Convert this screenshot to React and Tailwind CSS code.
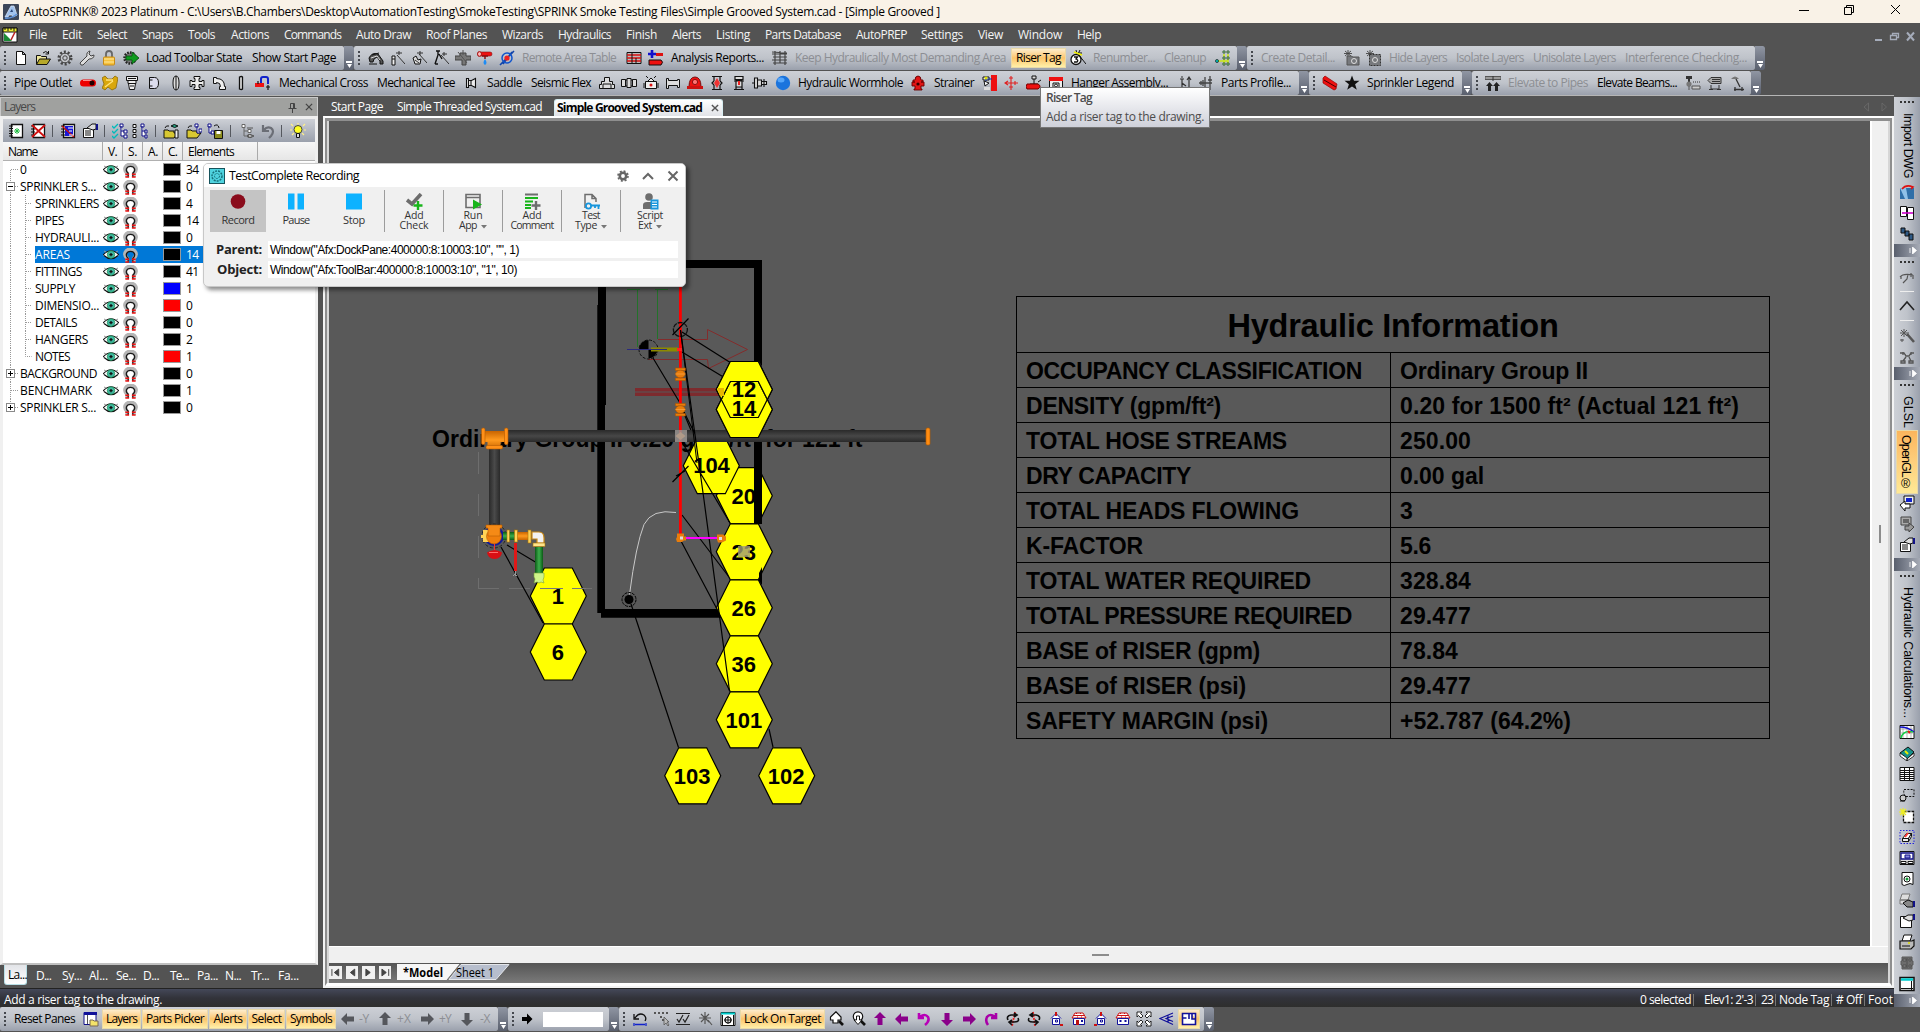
import React, { useLayoutEffect, useRef } from "react";

/* Text whose tracking is adjusted so that it fills a known width. */
function Fit({ w, className = "", children }) {
  const ref = useRef(null);
  useLayoutEffect(() => {
    const el = ref.current;
    el.style.letterSpacing = "0px";
    const natural = el.getBoundingClientRect().width;
    el.style.letterSpacing = (w - natural) / String(children).length + "px";
  }, [w, children]);
  return (
    <span ref={ref} className={"inline-block flex-none whitespace-pre " + className}>
      {children}
    </span>
  );
}

const K = "#111";
const G = "#6b6d72";

const magnet = (
  <>
    <path d="M4.500 15V11C0 7 2.500 1.500 8 1.500S16 7 11.500 11v4" fill="none" stroke="#b5b5b5" strokeWidth="4" />
    <path d="M5.500 15V11C2 8 3.500 3.500 8 3.500S14 8 10.500 11v4" fill="none" stroke="#1a1a1a" strokeWidth="1.400" />
    <path d="M2.500 12h4M2.500 15h4M9.500 12h4M9.500 15h4" stroke="#e11" strokeWidth="1.600" />
  </>
);
const tree = (c) => (
  <>
    <path d="M6 3v10h5M6 8h5" fill="none" stroke={c} />
    <path d="M4 1.500h3v3H4zM10 6.500h3v3h-3zM10 11.500h3v3h-3z" fill="#fff" stroke={c} />
  </>
);
const folder = <path d="M1 14V7h4l1 1h5v2h4l-4 5H1z" fill="#d8c832" stroke={K} />;
const house = (wide) =>
  wide ? (
    <>
      <path d="M1 7l3-5h8l3 5z" fill="#fff" stroke="#c11" />
      <path d="M3 4.500h10M5 2.500h1M9 2.500h1M6 6h1M10 6h1" stroke="#c11" />
      <path d="M2.500 7.500h11v6h-11z" fill="#fff" stroke="#11119a" />
    </>
  ) : (
    <>
      <path d="M4.500 7.500h7v6h-7zM3 7.500l5-5 5 5" fill="#fff" stroke="#11119a" />
      <path d="M8 1v4" stroke="#c11" strokeWidth="2" />
      <path d="M7.500 9h2v2h-2z" fill="none" stroke="#11119a" />
    </>
  );
const arrow = (rot, c) => (
  <path transform={`rotate(${rot} 8 8)`} d="M1 8l6-6v3.500h7v5H7V14z" fill={c} />
);
const burst = (c) => <path d="M4 0v7M0 3.500h8M1 1l6 5M7 1L1 6" stroke={c} strokeWidth=".9" fill="none" />;

const ICONS = {
  app: (
    <>
      <rect width="16" height="16" rx="1" fill="#3c4659" />
      <path d="M2 13L8 2h3l3 9-4 2-1-2H6l-1 2z" fill="#9fc1ec" stroke="#dfe9f8" strokeWidth=".7" />
      <path d="M7 8l2-3 1 3z" fill="#2d4878" />
      <path d="M2 14q6 1 12-4" stroke="#5d91d8" fill="none" strokeWidth="1.500" />
    </>
  ),
  cad: (
    <>
      <path d="M1 1h14v14H1z" fill="#fff" stroke={K} />
      <path d="M1 1h14v4H1z" fill="#ee3" stroke={K} />
      <path d="M3 1v2M6 1v3M9 1v2M12 1v3" stroke={K} />
      <path d="M2 6l8 8H2z" fill="#1b8a35" />
      <path d="M13 5l-4 8" stroke="#b22" strokeWidth="1.500" />
    </>
  ),
  new: <path d="M3.500 1.500h6l3 3v10h-9zM9.500 1.500v3h3" fill="#fff" stroke={K} />,
  open: (
    <>
      <path d="M1.500 14V5.500h4l1 1h5V9" fill="#efe79a" stroke={K} />
      <path d="M1.500 14.500L4.500 9h11l-3.500 5.500z" fill="#b7a92b" stroke={K} />
      <path d="M8 3q3-3 5 0M13.500 1v3h-3" stroke={K} fill="none" />
    </>
  ),
  gear: (
    <>
      <circle cx="8" cy="8" r="6" fill="none" stroke="#444" strokeWidth="3" strokeDasharray="2 1.770" />
      <circle cx="8" cy="8" r="4.800" fill="#c3c5c9" stroke="#444" />
      <circle cx="8" cy="8" r="2.200" fill="#c6c9cf" stroke="#444" />
    </>
  ),
  wrench: <path d="M2 15l-1-2 7-7q-1-4 3-5l-1 3 2 2 3-1q0 4-5 4l-6 6z" fill="#ddd" stroke="#444" />,
  lock: (
    <>
      <path d="M5 8V4q0-3 3-3t3 3v4" fill="none" stroke="#666" strokeWidth="1.800" />
      <rect x="2.500" y="7" width="11" height="8" rx="1" fill="#f7c23c" stroke="#c78a17" />
      <path d="M3 9h10M3 12h10" stroke="#fde79e" />
    </>
  ),
  gearArrow: (
    <>
      <circle cx="7" cy="8" r="5.500" fill="#777" stroke="#222" strokeWidth="2.500" strokeDasharray="1.600 1.200" />
      <path d="M3 6h6V2l7 6-7 6v-4H3z" fill="#0d9b1e" stroke="#0a4d12" strokeWidth=".8" />
    </>
  ),
  roof: (
    <>
      <path d="M1 8q3-6 9-4l5 7v3h-3v-3L9 7 6 9l-1 3H2z" fill="#555" stroke={K} />
      <path d="M1 14h8M4 5l7-2" stroke={K} />
      <path d="M3 8l6-2 3 4" fill="none" stroke="#ddd" />
    </>
  ),
  wand1: (
    <>
      <path d="M3 6h3v9H3zM3 9h3" fill="#eee" stroke={K} />
      <path d="M8 5l8 9M10 1v4M7 3h6" stroke="#333" />
    </>
  ),
  wand2: (
    <>
      <path d="M2 8l3-2 2 4 3-1-1 5H4z" fill="#ddd" stroke={K} />
      <path d="M8 4l8 9M9 1v4M6 3h6M4 10l4 3" stroke="#333" />
    </>
  ),
  wand3: (
    <>
      <path d="M3 1h4M5 1v4l-3 9M6 4l3 5M2 14h3" stroke={K} fill="none" strokeWidth="1.400" />
      <path d="M8 5l8 9M11 2v4M9 4h5" stroke="#333" />
    </>
  ),
  cross: (
    <>
      <path d="M0 6h5V3h6v3h5v4h-5v5H7v-5H0z" fill="#777" stroke="#444" />
      <path d="M8 0v5M3 2l9 11" stroke="#555" />
    </>
  ),
  headRed: (
    <>
      <path d="M1 2h12q2 0 2 2t-2 2H1z" fill="#e11" stroke="#811" strokeWidth=".6" />
      <ellipse cx="2.500" cy="4" rx="2" ry="2.300" fill="#fbb" stroke="#a11" />
      <path d="M5 6h6M8 6v3" stroke="#8a1111" strokeWidth="1.500" />
      <path d="M8 9q-3 4 0 6q3-2 0-6" fill="#1d8cf5" />
    </>
  ),
  link: (
    <>
      <path d="M1 15L15 1M4 14l9-12" stroke="#14a" strokeWidth="1.600" />
      <circle cx="8" cy="8" r="5" fill="none" stroke="#15c" strokeWidth="1.500" />
      <circle cx="8" cy="8" r="2.600" fill="#e22" />
    </>
  ),
  redTable: (
    <>
      <path d="M1 2.500h14v11H1z" fill="#bbb" stroke={K} />
      <path d="M1 5h14M1 8h14M1 11h14" stroke="#d11" strokeWidth="1.600" />
      <path d="M6 3v10M10 8v5" stroke={K} />
    </>
  ),
  plusPipe: (
    <>
      <path d="M4 0v8M0 4h8" stroke="#11c" strokeWidth="2.600" />
      <path d="M8 3h7v3H8z" fill="#d11" />
      <path d="M1 10h12q3 2 0 5H1z" fill="#e11" stroke={K} />
    </>
  ),
  fence: <path d="M3 1v14M8 1v12M13 1v14M0 4h15M1 7h14M0 10h15M1 13h14M0 2l15 1" stroke="#444" strokeWidth="1.200" fill="none" />,
  num3: (
    <>
      <circle cx="6" cy="9.500" r="5" fill="#fff" stroke={K} strokeWidth="1.300" />
      <path d="M4 7h3.500L6 9q3 1 1 3H4" fill="none" stroke={K} strokeWidth="1.300" />
      <path d="M8 4l8 10M6 0l1 4M10 0L8 4M12 3H8" stroke={K} />
      <path d="M4 2l8 3" stroke="#ee0" strokeWidth="1.800" />
    </>
  ),
  dots: (
    <>
      <path d="M2 11h11M9 4v9M13 4v9" stroke="#cce819" strokeWidth="1.500" fill="none" />
      <circle cx="2" cy="11" r="1.500" fill="#0cc" stroke={K} strokeWidth=".7" />
      <path d="M8 1h2v2H8zM12 1h2v2h-2zM8 13h2v2H8zM12 13h2v2h-2zM8 7h2v2H8zM12 7h2v2h-2z" fill="#dfd" stroke="#141" strokeWidth=".8" />
    </>
  ),
  detail: (
    <>
      {burst("#444")}
      <path d="M3 6h4l2 1h6v8H3z" fill="#77797d" stroke="#555" />
      <circle cx="10" cy="11" r="2.500" fill="none" stroke="#ddd" />
    </>
  ),
  detail2: (
    <>
      {burst("#444")}
      <path d="M3.500 4.500h11v11h-11z" fill="#77797d" stroke="#333" strokeDasharray="2 1" />
      <circle cx="9" cy="10" r="2.500" fill="none" stroke="#ddd" />
    </>
  ),
  redPipe: (
    <>
      <rect x="0" y="4.500" width="16" height="7" rx="3.500" fill="#e00" />
      <path d="M3 5.500h9" stroke="#ff8a8a" />
      <ellipse cx="12" cy="8" rx="2.500" ry="2.500" fill="#200" />
    </>
  ),
  yellowTee: (
    <>
      <path d="M0 3l3-2 3 3 4 0 3-3 3 2-1 5-1 5-4 2-4-3-3 3-3-2 2-4z" fill="#d9a70d" stroke="#8d6b06" strokeWidth=".8" />
      <path d="M4 5l7 0M3 12l8-6" stroke="#ffe27a" strokeWidth="1.300" />
    </>
  ),
  cup: <path d="M2.500 1.500h11v4h-11zM4 5.500h8v3H4zM4.500 8.500l1 6h5l1-6M4 3.500h8M6 11h4" fill="#eee" stroke={K} />,
  dShape: <path d="M3.500 2.500h5q4 0 4 5.500t-4 5.500h-5zM3.500 5h3M3.500 11h3" fill="#dde" stroke={K} />,
  ring: <path d="M8 1q3 0 3 7t-3 7q-3 0-3-7t3-7zM8 1v14" fill="#ddd" stroke={K} />,
  plusFit: <path d="M5 1.500h6v2h-1v3h3v-1h2v6h-2v-2h-3v3h1v2H5v-2h1v-3H3v2H1v-6h2v1h3v-3H5z" fill="#eee" stroke={K} />,
  elbow: <path d="M1.500 2.500h3v1q8 0 8 8h1v3h-6v-3h1q0-4-4-4v1h-3z" fill="#eee" stroke={K} />,
  bar: <path d="M6.500 2q2-1 3 0v12q-1 1-3 0z" fill="#ddd" stroke={K} strokeWidth="1.300" />,
  hook: (
    <>
      <path d="M6 8V4q0-2 2-2h3q2 0 2 2v5" fill="none" stroke="#12c" strokeWidth="2" />
      <path d="M0 8h9v4H0z" fill="#e11" />
      <path d="M3 6v3M13 10v5M11 12h4" stroke={K} strokeWidth="1.200" />
    </>
  ),
  saddleA: <path d="M3.500 3.500h2v9h-2zM5.500 5.500h3l4-2v9l-4-2h-3M8 6v4" fill="#eee" stroke={K} strokeWidth="1.100" />,
  teeA: <path d="M5.500 2.500h5v4h3v3h2v4h-15v-4h2v-3h3zM4 13V9h8v4" fill="#ddd" stroke={K} />,
  coupA: <path d="M.5 4.500h4v7h-4zM6 3.500h4v9H6zM11.500 4.500h4v7h-4zM4 5h2M4 11h2M10 5h2M10 11h2" fill="#ddd" stroke={K} />,
  valveA: (
    <>
      <path d="M2.500 6.500h11v7h-11zM1 8v5M15 8v5M5 6l3-3 3 3M3 1l2 2M13 1l-2 2" fill="#eee" stroke={K} />
      <circle cx="8" cy="10" r="1.500" fill="#d11" />
    </>
  ),
  tube: <path d="M1.500 3.500h2v2h9v-1h2v8h-2v-2h-9v3h-2z" fill="#ddd" stroke={K} />,
  alarm: (
    <>
      <path d="M2 12q0-10 6-10t6 10z" fill="#e11" stroke="#711" />
      <circle cx="8" cy="7" r="2.600" fill="#ff7373" stroke="#811" />
      <path d="M0 11h16v3H0z" fill="#c11" />
    </>
  ),
  valveB: (
    <>
      <path d="M3 1.500h10M3 14.500h10M5 2v4M11 2v4M5 10v4M11 10v4M5 6L3 8l2 2M11 6l2 2-2 2" fill="none" stroke={K} strokeWidth="1.200" />
      <path d="M8 3l3 5-3 5-3-5z" fill="#e33" />
    </>
  ),
  valveC: (
    <>
      <path d="M4 1.500h8v3H4zM5 5h6v7H5zM3 6h10M3 14.500h10M5 12v3M11 12v3" fill="#ddd" stroke={K} strokeWidth="1.200" />
      <path d="M7 6h2v4H7z" fill="#e22" />
    </>
  ),
  valveD: <path d="M2.500 3v10h3V3zM5.500 5h4v6h-4zM9.500 6.500h5v3h-5zM12 4v8M0 8h2" fill="#ddd" stroke={K} strokeWidth="1.100" />,
  sphere: (
    <>
      <circle cx="8" cy="8" r="7.200" fill="#1b74dd" />
      <ellipse cx="6" cy="5" rx="3.500" ry="2.500" fill="#55a6fa" />
    </>
  ),
  hydrant: (
    <>
      <path d="M5 5q0-4 3-4t3 4l2 0v2h-2v0h3v4h-3v3h1v1H4v-1h1v-3H2V7h3V7H3V5z" fill="#e01515" stroke="#600" strokeWidth=".9" />
      <circle cx="8" cy="9" r="1.600" fill="#300" />
    </>
  ),
  face: (
    <>
      <path d="M9 0h6v16H9z" fill="#e11" />
      <path d="M1 2h6v3H1zM2 6l5 2-4 3z" fill="#fff" stroke={K} />
      <path d="M2 12h6v3H2z" fill="#ddd" />
      <path d="M4 2v4M3 4h7" stroke="#13a" />
      <circle cx="4" cy="3" r="1.500" fill="#dd0" />
    </>
  ),
  crossRed: <path d="M8 1v14M2 8h13M5 6l-3 2 3 2M6 3h4M6 12h4M12 6v4" stroke="#e02020" fill="none" strokeWidth="1.100" />,
  hangRed: (
    <>
      <path d="M6 1h4v3H6zM8 4v5M4 9h8" fill="#ddd" stroke={K} />
      <path d="M1 9h11q4 2 0 5H1q-2-2 0-5z" fill="#e11" stroke="#700" />
      <path d="M12 7l3-2" stroke={K} />
    </>
  ),
  box: (
    <>
      <path d="M1.500 3.500h13v11h-13z" fill="#eee" stroke={K} />
      <path d="M1 2h14v4H1z" fill="#e11" />
      <path d="M5 8h6v5H5z" fill="none" stroke={K} />
      <circle cx="8" cy="10.500" r="1.500" fill="none" stroke={K} />
    </>
  ),
  pump: <path d="M2 14h7M5 14V4M3 4h4M5 8l4 3M4 2h2M12 3v12M10 5l2-3 2 3M10 15h4" stroke="#333" fill="none" strokeWidth="1.200" />,
  pump2: <path d="M1 8h13M5 5v6M7 2v12M12 1v14M10 5h4M3 6v4" stroke="#444" fill="none" strokeWidth="1.300" />,
  redBeam: (
    <>
      <path d="M1 3l2-2 12 8-1 5-2 1L1 8z" fill="#e11" stroke="#900" strokeWidth=".7" />
      <path d="M2 5l12 7" stroke="#400" />
    </>
  ),
  star: <path d="M8 .5l2 5.200h5.500l-4.400 3.500 1.700 5.600L8 11.500l-4.800 3.300 1.700-5.600L.5 5.700H6z" fill={K} />,
  elevate: (
    <>
      <path d="M0 1.500h16v3H0z" fill="#999" stroke="#555" />
      <path d="M4.500 7L1 11h2v5h3v-5h2zM11.500 7L8 11h2v5h3v-5h2z" fill="#222" />
      <path d="M8 1v5" stroke="#333" />
    </>
  ),
  hangA: (
    <>
      <path d="M1 1h6v3H1zM3 4h2v3H3z" fill="#333" />
      <circle cx="4" cy="9" r="2.600" fill="#777" />
      <path d="M4 11v4" stroke="#555" />
      <path d="M8 7h8" stroke="#333" strokeDasharray="1 1" />
      <path d="M7 11h8v3H7z" fill="#ccc" stroke="#555" />
    </>
  ),
  hangB: <path d="M4 2.500h10v6H4L1 5.500zM5 4.500h8M5 6.500h8M4 10v4M12 10v4M2 14.500h4M10 14.500h4M4 14h8" fill="#aaa" stroke="#333" />,
  hangC: (
    <>
      <path d="M2 4q4-5 8 0z" fill="#777" />
      <path d="M7 4l4 8M5 14.500h10M6 12v4M13 12v4" stroke="#333" fill="none" strokeWidth="1.300" />
    </>
  ),
  eye: (
    <>
      <path d="M0 8Q8-1 16 8 8 15 0 8z" fill="#fff" />
      <path d="M0 8Q8-.5 16 8M1 8.500Q8 15 15 8.500" fill="none" stroke={K} strokeWidth="1.100" />
      <path d="M1 4l2 1M15 4l-2 1" stroke="#999" />
      <circle cx="8" cy="7.600" r="3.800" fill="#3fb8a0" stroke="#184" strokeWidth=".6" />
      <path d="M8 6v3.200M6.400 7.600h3.200" stroke={K} strokeWidth="1.300" />
    </>
  ),
  magnet,
  bookNew: (
    <>
      <path d="M3.500 1.500h11v13h-11z" fill="#fff" stroke={K} strokeWidth="1.300" />
      <path d="M1 3h4M1 5.500h4M1 8h4M1 10.500h4M1 13h4" stroke={K} />
      <path d="M9 5v6M6 8h6M7 6l4 4M11 6l-4 4" stroke="#2b4" />
    </>
  ),
  bookDel: (
    <>
      <path d="M3.500 1.500h11v13h-11z" fill="#fff" stroke={K} strokeWidth="1.300" />
      <path d="M1 3h4M1 6h4M1 9h4M1 12h4" stroke={K} />
      <path d="M2 2l13 12M15 2L2 14" stroke="#d01010" strokeWidth="1.800" />
    </>
  ),
  bookBlue: (
    <>
      <path d="M3.500 1.500h11v13h-11z" fill="#fff" stroke={K} strokeWidth="1.300" />
      <path d="M5 3h8v10H5z" fill="#1818d8" />
      <path d="M1 3h4M1 6h4M1 9h4M1 12h4" stroke={K} />
      <path d="M2 3l12 11" stroke="#d01010" strokeWidth="1.300" />
      <path d="M8 5h5M9 8h3M9 12h4" stroke="#fff" />
    </>
  ),
  props: (
    <>
      <path d="M1.500 5.500h10v9h-10zM3 8h6M3 10h6M3 12h6" fill="#fff" stroke={K} />
      <path d="M5 5l5-4h4v5l-3 1-3-1z" fill="#ddd" stroke={K} />
      <path d="M14 1h2v6h-2z" fill="#118" />
    </>
  ),
  checks: (
    <>
      <path d="M0 3l2 2 4-4M0 8l2 2 4-4M0 13l2 2 4-4" stroke="#0bb" fill="none" strokeWidth="1.300" />
      <path d="M9 3v10h3M9 8h3M8 1h3v3H8zM12 7h3v3h-3zM12 12h3v3h-3z" fill="#fff" stroke="#118" />
    </>
  ),
  boxes: (
    <>
      <path d="M1 1.500h3v3H1zM1 6.500h3v3H1zM1 11.500h3v3H1z" fill="#fff" stroke={K} />
      <path d="M10 3v10h3M10 8h3M9 1h3v3H9zM13 7h2v3h-2zM13 12h2v3h-2z" fill="#fff" stroke="#118" />
    </>
  ),
  folderEye: (
    <>
      {folder}
      <path d="M8 3q3-3 7 0-3 3-7 0" fill="#2a8" stroke={K} />
      <path d="M12 7h3v8h-3z" fill="#eee" stroke={K} />
      <path d="M2 5q1-3 4-2" fill="none" stroke={K} />
    </>
  ),
  folderTree: (
    <>
      {folder}
      <path d="M11 3v7h3M9 1h3v3H9zM13 6h3v3h-3z" fill="#fff" stroke="#118" />
      <path d="M2 5q1-3 4-2" fill="none" stroke={K} />
    </>
  ),
  treeSave: (
    <>
      <path d="M2 3v7h3M1 1h3v3H1zM4 8h3v3H4z" fill="#fff" stroke="#118" />
      <path d="M7.500 7.500h8v8h-8z" fill="#8a8a1c" stroke={K} />
      <path d="M9.500 8h4v3h-4z" fill="#fff" />
      <path d="M7 3q4-3 5 2" stroke={K} fill="none" />
    </>
  ),
  treeGray: (
    <>
      {tree("#666")}
      <path d="M9 5h6M9 13q3-3 7 0-3 3-7 0" stroke="#555" fill="none" />
    </>
  ),
  undoGray: <path d="M3 2v6h6M4 7q3-4 7-2 4 3 0 8l-2 2" fill="none" stroke="#6b6e76" strokeWidth="2.200" />,
  bulb: (
    <>
      <circle cx="8" cy="6.500" r="4" fill="#ff2" stroke="#333" strokeWidth=".9" />
      <path d="M6.500 10.500h3v4h-3z" fill="#ddd" stroke={K} />
      <path d="M1 1l2 2M15 1l-2 2M0 7h2M14 7h2M8 0v1.500M2 12l2-2M14 12l-2-2" stroke="#fff08a" strokeWidth="1.200" />
    </>
  ),
  panes: (
    <>
      <path d="M1 1.500h12v12H1z" fill="#fff" stroke="#118" />
      <path d="M1 1h13v3H1z" fill="#11119a" />
      <path d="M4.500 4v9" stroke="#555" />
      <path d="M7 9h3l1 1h4v5H7z" fill="#f3e36a" stroke="#765" />
    </>
  ),
  aL: arrow(0, "#55575c"),
  aU: arrow(90, "#55575c"),
  aR: arrow(180, "#55575c"),
  aD: arrow(270, "#55575c"),
  go: <path d="M3 6h5V2.500L13.500 8 8 13.500V10H3z" fill="#000" />,
  undoBlue: (
    <>
      <path d="M2 3v5h5M3 7q4-6 9-3 3 3 1 6" fill="none" stroke={K} strokeWidth="1.300" />
      <path d="M3 13.500h10M2 12v3M14 12v3" stroke="#12c" strokeWidth="1.300" />
    </>
  ),
  pts: (
    <>
      <path d="M0 1h2v2H0zM4 1h2v2H4zM8 1h2v2H8zM12 1h2v2h-2zM6 5h2v2H6zM8 8h2v2H8z" fill="#555" />
      <path d="M10 6v8l2-2 2 3 1-1-2-3h2z" fill="#bbb" stroke="#555" strokeWidth=".8" />
    </>
  ),
  chk: <path d="M1 2.500h14M1 13.500h14M2 8l2 3 4-7M8 8l2 3 4-7" fill="none" stroke="#222" strokeWidth="1.200" />,
  starGray: <path d="M7 1v12M1 7h12M3 3l8 8M11 3l-8 8M10 9l4 5" stroke="#555" strokeWidth="1.200" />,
  target: (
    <>
      <path d="M1 1.500h14v13H1z" fill="#fff" stroke={K} />
      <path d="M1 2.500h14" stroke="#0cc" strokeWidth="2" />
      <path d="M2.500 4v10M13.500 4v10" stroke={K} />
      <circle cx="8" cy="9" r="3" fill="#fff" stroke={K} strokeWidth="1.200" />
      <path d="M8 5v8M4 9h8" stroke={K} />
    </>
  ),
  zoomA: (
    <>
      <path d="M10 10l4 4" stroke={K} strokeWidth="2.600" />
      <path d="M7 .8L1.500 6v3H4v3h5V9h3V6z" fill="#fff" stroke={K} strokeWidth="1.200" />
    </>
  ),
  zoomB: (
    <>
      <path d="M10 10l4 4" stroke={K} strokeWidth="2.600" />
      <circle cx="7" cy="5.500" r="4.700" fill="#fff" stroke={K} strokeWidth="1.200" />
      <path d="M5.500 5v4H3l4 4.500L11 9H8.500V5z" fill="#fff" stroke={K} />
    </>
  ),
  mU: arrow(90, "#8a008a"),
  mL: arrow(0, "#8a008a"),
  mD: arrow(270, "#8a008a"),
  mR: arrow(180, "#8a008a"),
  mCC: <path d="M3 2v5h5M4 6q5-4 8 0 2 4-3 8" fill="none" stroke="#b800b8" strokeWidth="2.600" />,
  mCW: <path d="M13 2v5H8M12 6Q7 2 4 6q-2 4 1 8" fill="none" stroke="#a800a8" strokeWidth="2.600" />,
  rotA: (
    <>
      <path d="M10 1L7 15" stroke="#e22" strokeWidth="1.800" strokeDasharray="2 1" />
      <path d="M3 9Q1 5 6 4l5 0M9 2l3 2-3 2M13 7q2 4-4 4L5 11M7 9l-3 2 3 3" fill="none" stroke={K} strokeWidth="1.600" />
    </>
  ),
  rotB: (
    <>
      <path d="M7 1l2 14" stroke="#e22" strokeWidth="1.800" strokeDasharray="2 1" />
      <path d="M13 9q2-4-3-5L5 4M7 2L4 4l3 2M3 7q-2 4 4 4l4 0M9 9l3 2-3 3" fill="none" stroke={K} strokeWidth="1.600" />
    </>
  ),
  h1: (
    <>
      {house(false)}
      <path d="M12 14h3" stroke="#c11" strokeWidth="2" />
    </>
  ),
  h2: (
    <>
      {house(true)}
      <path d="M5 9h3v5H5z" fill="#b11" />
      <path d="M10 9h2v2h-2z" fill="#11119a" />
    </>
  ),
  h3: (
    <>
      {house(false)}
      <path d="M1 14h3" stroke="#c11" strokeWidth="2" />
    </>
  ),
  h4: (
    <>
      {house(true)}
      <path d="M4.500 9h2v2h-2zM9.500 9h2v2h-2z" fill="#11119a" />
    </>
  ),
  expand: (
    <path d="M1 1h5L4.500 2.500 7 5 5 7 2.500 4.500 1 6zM15 1v5l-1.500-1.500L11 7 9 5l2.500-2.500L10 1zM15 15h-5l1.500-1.500L9 11l2-2 2.500 2.500L15 10zM1 15v-5l1.500 1.500L5 9l2 2-2.500 2.500L6 15z" fill="#fff" stroke={K} strokeWidth=".9" />
  ),
  views: <path d="M14 2L1 7.500l13 6M14 5L7 7.500 14 10.500M9 4.500v7" fill="none" stroke="#11119a" strokeWidth="1.100" />,
  plan: <path d="M1.500 2.500h13v11h-13zM1.500 7h4M8 2.500V8M11 2.500V8h3.500" fill="#fff" stroke="#11119a" strokeWidth="1.600" />,
  dwg: (
    <>
      <path d="M1 4h14v11H1z" fill="#2f6fa8" />
      <path d="M1 4l5 11h3L7 4z" fill="#8fc1e8" />
      <path d="M3 5q4-5 11-2l-2 2" fill="none" stroke="#d11" strokeWidth="1.600" />
    </>
  ),
  pages: (
    <>
      <path d="M1.500 1.500h6v10h-6zM8.500 2.500h6v12h-6z" fill="#fff" stroke={K} />
      <path d="M3 8h11" stroke="#c0c" strokeWidth="1.600" />
    </>
  ),
  chain: <path d="M2 2h4v5H2zM6 5h4v5H6zM10 8h4v6h-4z" fill="#2f5a86" stroke={K} />,
  nodeG: <path d="M1 7Q4 3 14 5M9 4l-1 5-4 4M12 3v4M2 6v3M14 5v4" stroke="#555" fill="none" strokeWidth="1.200" />,
  angle: <path d="M1 12l7-8 7 8" stroke="#222" fill="none" strokeWidth="1.600" />,
  wandG: (
    <>
      <path d="M8 6l7 8" stroke="#555" strokeWidth="2.500" />
      <path d="M5 1v8M1 5h9M2 2l6 6M8 2L2 8M3 11v3M1 12h4" stroke="#555" />
    </>
  ),
  nodes: <path d="M1 4h4l2 3h3l2-3h3M4 12l3-4M12 12l-2-4M2 12h4v2H2zM10 12h4v2h-4zM6 6h1M4 3v3M12 3v3" stroke="#555" fill="none" strokeWidth="1.300" />,
  pcBlue: (
    <>
      <path d="M5 1h10v8H5z" fill="#eee" stroke={K} />
      <path d="M7 3h6v4H7z" fill="#12c" />
      <path d="M1 10l5-4v3h5v4H6v3z" fill="#fff" stroke={K} />
    </>
  ),
  pcGray: (
    <>
      <path d="M2 1h10v8H2z" fill="#aaa" stroke="#444" />
      <path d="M4 3h6v4H4z" fill="#666" />
      <path d="M15 11l-5-4v3H6v4h4v2z" fill="#999" stroke="#444" />
    </>
  ),
  chart: (
    <>
      <path d="M1 1.500h14v13H1z" fill="#fff" stroke={K} />
      <path d="M4 2v12M8 2v12M12 2v12M1 5h14M1 9h14" stroke="#999" strokeWidth=".7" />
      <path d="M1 3q8 0 14 5" stroke="#11c" fill="none" strokeWidth="1.500" />
      <path d="M2 14q2-8 12-6" stroke="#1c4" fill="none" strokeWidth="1.500" />
      <path d="M9 7l2 2" stroke="#e11" strokeWidth="2" />
    </>
  ),
  book: (
    <>
      <path d="M1 8l8-6 6 5-7 7z" fill="#16908a" stroke={K} />
      <path d="M1 8v3l7 5v-3zM8 14l7-6v3l-7 5z" fill="#fff" stroke={K} strokeWidth=".8" />
      <path d="M6 6l3 3" stroke="#ee0" strokeWidth="2" />
    </>
  ),
  grid: <path d="M1 1.500h14v13H1zM1 4.500h14M1 6.500h14M1 8.500h14M1 10.500h14M1 12.500h14M5.500 2v12M10.500 2v12" fill="#fff" stroke={K} />,
  lasso: (
    <>
      <path d="M5 2.500h10v7H7q-3-2-2-7" fill="none" stroke={K} strokeDasharray="2 1.300" />
      <circle cx="4" cy="11" r="3" fill="#ccc" stroke={K} />
      <path d="M1 14h5" stroke={K} />
    </>
  ),
  sheetNew: (
    <>
      <path d="M4.500 3.500h10v11h-10z" fill="#fff" stroke={K} strokeDasharray="3 1" strokeWidth="1.300" />
      <path d="M4 0v8M0 4h8M1 1l6 6M7 1L1 7" stroke="#ee2" strokeWidth="1.200" />
    </>
  ),
  eraser: (
    <>
      <path d="M1 1.500h14v13H1z" fill="none" stroke="#22d" strokeDasharray="1.500 1.500" />
      <path d="M3.500 9.500l4-5h5l-3 5z" fill="#fff" stroke={K} />
      <path d="M9.500 9.500l3-5v3l-3 5zM3.500 9.500h6v3h-6z" fill="#eee" stroke={K} />
      <path d="M6 8l3-4" stroke="#f33" strokeWidth="1.800" />
    </>
  ),
  panel: (
    <>
      <path d="M1 1.500h14v13H1z" fill="#ddd" stroke={K} />
      <path d="M2 3h12v6H2z" fill="#fff" stroke="#118" strokeWidth="1.300" />
      <path d="M6 5h5v3H6z" fill="#88d" stroke="#118" />
      <path d="M2 11.500h5v2H2zM9 11.500h5v2H9z" fill="#fff" stroke={K} />
    </>
  ),
  eyeDoc: (
    <>
      <path d="M3 1.500h11v12q-3-2-6 0-3 2-5 0z" fill="#fff" stroke={K} />
      <circle cx="8" cy="8" r="3" fill="#fff" stroke={K} />
      <circle cx="8" cy="8" r="1.500" fill="#193" />
    </>
  ),
  printHand: (
    <>
      <path d="M3 2h8l-2 6H1zM1 8h10v4H1z" fill="#ddd" stroke="#777" />
      <path d="M4 11l5-3 5 2v5H8z" fill="#888" stroke={K} />
      <path d="M14 9h2v6h-2z" fill="#118" />
    </>
  ),
  docHand: (
    <>
      <path d="M1.500 3.500h11v11h-11z" fill="#fff" stroke={K} />
      <path d="M4 5l5-3h5v5l-4 1z" fill="#ddd" stroke={K} />
      <path d="M14 1h2v6h-2z" fill="#118" />
    </>
  ),
  printer: (
    <>
      <path d="M5 1h8l-2 6H3z" fill="#fff" stroke={K} />
      <path d="M1 7h12l2-1v6l-3 3H1z" fill="#bbb" stroke={K} strokeWidth="1.200" />
      <path d="M3 12h8" stroke={K} />
      <path d="M9 9h2" stroke="#dd0" strokeWidth="1.500" />
    </>
  ),
  cross4: (
    <>
      <path d="M3 2h10v4h1v4h-1v4H3v-4H2V6h1z" fill="#6d6d6d" stroke="#5a5a5a" />
      <path d="M4 4h3v2H4zM10 4h2v2h-2zM4 10h3v2H4zM10 10h2v2h-2zM8 3v10" fill="#8d8d8d" stroke="#444" strokeWidth=".7" />
    </>
  ),
  win: (
    <>
      <path d="M1 1.500h14v13H1z" fill="#fff" stroke={K} strokeWidth="1.500" />
      <path d="M2 3.500h12" stroke="#0cc" strokeWidth="2.500" />
      <path d="M12.500 5v9M2 12.500h12" stroke={K} />
    </>
  ),
};

function Icon({ n, size = "h-4 w-4" }) {
  return (
    <svg viewBox="0 0 16 16" className={"flex-none " + size}>
      {ICONS[n]}
    </svg>
  );
}

/* Toolbar entries: text with its extent, an icon by its centre, a pressed button. */
const t = (x, text, x2, dim) => ({ x, text, w: x2 - x, dim });
const i = (cx, icon) => ({ x: cx - 8, icon });
const b = (x, x2, text, tx, tx2) => ({ x, bw: x2 - x, text, w: tx2 - tx });
const bi = (x, x2, icon) => ({ x, bw: x2 - x, icon });

function Overflow() {
  return (
    <div className="flex h-full w-[10px] flex-none flex-col items-center justify-end rounded-r-[2px] bg-gradient-to-b from-[#9096a3] to-[#5a606e] pb-[2px]">
      <div className="mb-px h-[2px] w-[6px] bg-white" />
      <svg viewBox="0 0 6 4" className="h-1 w-[6px]">
        <path d="M1 0h5L3.500 4z" fill="#fff" />
      </svg>
    </div>
  );
}

function ToolBar({ start, end, items }) {
  const body = end - start - 10;
  return (
    <div className="flex h-full flex-none overflow-hidden rounded-[2px]" style={{ width: end - start }}>
      <div
        className="flex h-full flex-none items-center rounded-r-[2px] bg-gradient-to-b from-[#cdd0d6] via-[#bfc3ca] to-[#9aa0ac]"
        style={{ width: body }}
      >
        <div className="flex h-full flex-none items-center pl-1" style={{ width: items[0].x - start }}>
          <div className="flex flex-col gap-[2px]">
            <div className="h-[2px] w-[2px] bg-[#44474d]" />
            <div className="h-[2px] w-[2px] bg-[#44474d]" />
            <div className="h-[2px] w-[2px] bg-[#44474d]" />
            <div className="h-[2px] w-[2px] bg-[#44474d]" />
          </div>
        </div>
        {items.map((it, k) => {
          const next = k + 1 < items.length ? items[k + 1].x : start + body;
          return (
            <div key={k} className="flex h-full flex-none items-center" style={{ width: next - it.x }}>
              {it.bw ? (
                <div
                  className="flex h-5 flex-none items-center justify-center border border-[#e8d9a8] bg-gradient-to-b from-[#fdeccb] via-[#fcc56b] to-[#fff0a8]"
                  style={{ width: it.bw }}
                >
                  {it.icon ? <Icon n={it.icon} /> : <Fit w={it.w}>{it.text}</Fit>}
                </div>
              ) : it.icon ? (
                <Icon n={it.icon} />
              ) : it.field ? (
                <div className="h-[15px] w-[60px] bg-white" />
              ) : (
                <Fit w={it.w} className={it.dim ? "text-[#8c8e93]" : "text-black"}>
                  {it.text}
                </Fit>
              )}
            </div>
          );
        })}
      </div>
      <Overflow />
    </div>
  );
}

const ROW1 = [
  { start: 0, end: 354, items: [i(21, "new"), i(43, "open"), i(65, "gear"), i(87, "wrench"), i(109, "lock"), i(131, "gearArrow"), t(146, "Load Toolbar State", 242), t(252, "Show Start Page", 336)] },
  {
    start: 354,
    end: 1247,
    items: [
      i(376, "roof"), i(397, "wand1"), i(419, "wand2"), i(441, "wand3"), i(463, "cross"), i(485, "headRed"), i(507, "link"),
      t(522, "Remote Area Table", 616, 1), i(634, "redTable"), i(656, "plusPipe"), t(671, "Analysis Reports...", 764), i(780, "fence"),
      t(795, "Keep Hydraulically Most Demanding Area", 1006, 1), b(1011, 1066, "Riser Tag", 1015, 1060), i(1078, "num3"),
      t(1093, "Renumber...", 1155, 1), t(1164, "Cleanup", 1206, 1), i(1223, "dots"),
    ],
  },
  {
    start: 1247,
    end: 1765,
    items: [
      t(1261, "Create Detail...", 1335, 1), i(1352, "detail"), i(1374, "detail2"), t(1389, "Hide Layers", 1447, 1), t(1456, "Isolate Layers", 1524, 1),
      t(1533, "Unisolate Layers", 1616, 1), t(1625, "Interference Checking...", 1747, 1),
    ],
  },
];

const ROW2 = [
  {
    start: 0,
    end: 1309,
    items: [
      t(14, "Pipe Outlet", 72), i(88, "redPipe"), i(110, "yellowTee"), i(132, "cup"), i(154, "dShape"), i(176, "ring"), i(197, "plusFit"), i(220, "elbow"),
      i(241, "bar"), i(263, "hook"), t(279, "Mechanical Cross", 368), t(377, "Mechanical Tee", 455), i(471, "saddleA"), t(487, "Saddle", 522),
      t(531, "Seismic Flex", 591), i(607, "teeA"), i(629, "coupA"), i(651, "valveA"), i(673, "tube"), i(695, "alarm"), i(717, "valveB"), i(739, "valveC"),
      i(760, "valveD"), i(783, "sphere"), t(798, "Hydraulic Wormhole", 903), i(918, "hydrant"), t(934, "Strainer", 974), i(990, "face"), i(1011, "crossRed"),
      i(1034, "hangRed"), i(1056, "box"), t(1071, "Hanger Assembly...", 1168), i(1185, "pump"), i(1206, "pump2"), t(1221, "Parts Profile...", 1291),
    ],
  },
  { start: 1309, end: 1472, items: [i(1330, "redBeam"), i(1352, "star"), t(1367, "Sprinkler Legend", 1454)] },
  { start: 1472, end: 1761, items: [i(1493, "elevate"), t(1508, "Elevate to Pipes", 1588, 1), t(1597, "Elevate Beams...", 1677), i(1693, "hangA"), i(1715, "hangB"), i(1737, "hangC")] },
];

const ROW3 = [
  {
    start: 0,
    end: 508,
    items: [
      t(14, "Reset Panes", 75), i(91, "panes"), b(102, 141, "Layers", 106, 137), b(142, 208, "Parts Picker", 146, 204), b(209, 247, "Alerts", 213, 242),
      b(248, 285, "Select", 251, 281), b(286, 336, "Symbols", 290, 332), i(348, "aL"), t(359, "-Y", 369, 1), i(385, "aU"), t(397, "+X", 411, 1), i(427, "aR"),
      t(439, "+Y", 451, 1), i(467, "aD"), t(480, "-X", 490, 1),
    ],
  },
  { start: 508, end: 619, items: [i(527, "go"), { x: 543, field: true }] },
  {
    start: 619,
    end: 1214,
    items: [
      i(640, "undoBlue"), i(662, "pts"), i(683, "chk"), i(706, "starGray"), i(728, "target"), b(740, 825, "Lock On Target", 743, 820), i(837, "zoomA"), i(859, "zoomB"),
      i(880, "mU"), i(902, "mL"), i(924, "mCC"), i(947, "mD"), i(969, "mR"), i(991, "mCW"), i(1013, "rotA"), i(1034, "rotB"), i(1056, "h1"), i(1079, "h2"),
      i(1101, "h3"), i(1123, "h4"), i(1144, "expand"), i(1167, "views"), bi(1178, 1200, "plan"),
    ],
  },
];

/* A line of labels, each given as [left, right, text]. */
function Labels({ from = 0, items, className = "" }) {
  return (
    <div className={"flex items-center " + className}>
      <div className="flex-none" style={{ width: items[0][0] - from }} />
      {items.map(([x, x2, text], k) => (
        <div key={k} className="flex-none" style={{ width: (k + 1 < items.length ? items[k + 1][0] : x2) - x }}>
          <Fit w={x2 - x}>{text}</Fit>
        </div>
      ))}
    </div>
  );
}

const MENU = [
  [29, 47, "File"], [62, 82, "Edit"], [97, 127, "Select"], [142, 173, "Snaps"], [188, 215, "Tools"], [231, 269, "Actions"], [284, 341, "Commands"],
  [356, 411, "Auto Draw"], [426, 487, "Roof Planes"], [502, 543, "Wizards"], [558, 611, "Hydraulics"], [626, 657, "Finish"], [672, 701, "Alerts"],
  [716, 750, "Listing"], [765, 841, "Parts Database"], [856, 907, "AutoPREP"], [921, 963, "Settings"], [978, 1003, "View"], [1018, 1062, "Window"], [1077, 1101, "Help"],
];

const LAYERS = [
  [1, "0", 8, "#000", "34"],
  [1, "SPRINKLER S...", 76, "#000", "0", "-"],
  [2, "SPRINKLERS", 64, "#000", "4"],
  [2, "PIPES", 29, "#000", "14"],
  [2, "HYDRAULI...", 64, "#000", "0"],
  [2, "AREAS", 35, "#000", "14", "", true],
  [2, "FITTINGS", 47, "#000", "41"],
  [2, "SUPPLY", 40, "#00f", "1"],
  [2, "DIMENSIO...", 64, "#f00", "0"],
  [2, "DETAILS", 42, "#000", "0"],
  [2, "HANGERS", 53, "#000", "2"],
  [2, "NOTES", 35, "#f00", "1"],
  [1, "BACKGROUND", 77, "#000", "0", "+"],
  [1, "BENCHMARK", 72, "#000", "1"],
  [1, "SPRINKLER S...", 76, "#000", "0", "+"],
];

function TreeCell({ level, sign, last, end, first }) {
  const s = { stroke: "#999", strokeDasharray: "1 1", fill: "none" };
  return (
    <svg className={"h-[17px] flex-none " + (level === 1 ? "w-[17px]" : "w-8")} viewBox={level === 1 ? "0 0 17 17" : "0 0 32 17"}>
      <path d={first ? "M7.500 9v8" : end ? "M7.500 0v9" : "M7.500 0v17"} {...s} />
      {level === 1 ? <path d="M8 8.500h7" {...s} /> : <path d={last ? "M22.500 0v8.500h6" : "M22.500 0v17M23 8.500h6"} {...s} />}
      {sign ? (
        <>
          <rect x="3.500" y="4.500" width="8" height="8" fill="#fff" stroke="#8a8a8a" />
          <path d={sign === "+" ? "M5 8.500h5M7.500 6v5" : "M5 8.500h5"} stroke="#000" />
        </>
      ) : null}
    </svg>
  );
}

const LAYER_TOOLS = [
  ["bookNew", 22], ["bookDel", 22], ["", 8], ["bookBlue", 22], ["props", 22], ["", 8], ["checks", 20], ["boxes", 23], ["", 8],
  ["folderEye", 23], ["folderTree", 21], ["treeSave", 23], ["", 8], ["treeGray", 22], ["undoGray", 21], ["", 9], ["bulb", 26],
];

function LayersPanel() {
  return (
    <div className="flex h-[891px] w-[319px] flex-none flex-col">
      <div className="flex h-[19px] w-[318px] items-center border border-b-0 border-[#c9c9c9] bg-[#a0a19f] pl-[3px] text-[#484848]">
        <Fit w={31} className="mr-[253px]">Layers</Fit>
        <svg viewBox="0 0 9 11" className="mr-2 h-[11px] w-[9px]">
          <path d="M2.500 6V1.500h4V6M5.500 2v4M.500 6.500h8M4.500 7v4" fill="none" stroke="#444" />
        </svg>
        <svg viewBox="0 0 9 9" className="h-[8px] w-[8px]">
          <path d="M1 1l7 7M8 1L1 8" stroke="#444" strokeWidth="1.400" />
        </svg>
      </div>
      <div className="flex h-[849px] w-[318px] flex-col border-[3px] border-t-[3px] border-b-2 border-[#f0f0f0] border-b-[#c0c0c0] bg-white">
        <div className="flex h-[23px] flex-none items-center bg-gradient-to-b from-[#cdd0d6] to-[#9aa0ac] pl-[5px]">
          {LAYER_TOOLS.map(([n, w], k) => (
            <div key={k} className="flex-none" style={{ width: w }}>
              {n ? <Icon n={n} /> : <div className="h-3 w-px bg-[#55585f]" />}
            </div>
          ))}
        </div>
        <div className="flex h-[19px] flex-none items-center border-b border-[#b0b0b0] bg-gradient-to-b from-[#f7f7f7] to-[#e6e6e6] text-black">
          <div className="flex h-full w-[100px] items-center border-r border-[#aaa] pl-[5px] pt-[2px]"><Fit w={29}>Name</Fit></div>
          <div className="flex h-full w-5 items-center border-r border-[#aaa] pl-[5px] pt-[2px]"><Fit w={9}>V.</Fit></div>
          <div className="flex h-full w-5 items-center border-r border-[#aaa] pl-[5px] pt-[2px]"><Fit w={9}>S.</Fit></div>
          <div className="flex h-full w-5 items-center border-r border-[#aaa] pl-[5px] pt-[2px]"><Fit w={10}>A.</Fit></div>
          <div className="flex h-full w-5 items-center border-r border-[#aaa] pl-[5px] pt-[2px]"><Fit w={9}>C.</Fit></div>
          <div className="flex h-full w-[75px] items-center border-r border-[#aaa] pl-[5px] pt-[2px]"><Fit w={46}>Elements</Fit></div>
        </div>
        {LAYERS.map(([lv, name, w, color, count, sign, sel], k) => (
          <div key={k} className="flex h-[17px] flex-none items-center text-black">
            <TreeCell level={lv} sign={sign} first={k === 0} last={k === 11} end={k === 14} />
            <div className={"flex h-full flex-1 items-center " + (sel ? "bg-[#0078d7] text-white" : "")}>
              <div className={"flex-none " + (lv === 1 ? "w-[83px]" : "w-[68px]")}>
                <Fit w={w}>{name}</Fit>
              </div>
              <div className="w-5 flex-none"><Icon n="eye" /></div>
              <div className="w-10 flex-none pt-px"><Icon n="magnet" size="h-[15px] w-[15px]" /></div>
              <div className="h-[13px] w-[18px] flex-none border border-[#9a9a9a]" style={{ backgroundColor: color }} />
              <Fit w={count.length * 6.300} className="ml-[5px]">{count}</Fit>
            </div>
          </div>
        ))}
      </div>
      <div className="flex h-[21px] text-white">
        <div className="w-1 flex-none" />
        <div className="flex h-5 w-[23px] flex-none items-center rounded-b-[3px] border border-t-0 border-[#b8dfe6] bg-gradient-to-b from-[#e2e4e8] to-white pl-[3px] pt-px text-black">
          <Fit w={19}>La...</Fit>
        </div>
        <Labels from={27} className="h-[22px]" items={[[36, 51, "D..."], [62, 82, "Sy..."], [89, 108, "Al..."], [116, 136, "Se..."], [143, 159, "D..."], [170, 189, "Te..."], [197, 218, "Pa..."], [225, 241, "N..."], [251, 269, "Tr..."], [278, 299, "Fa..."]]} />
      </div>
    </div>
  );
}

const HEXES = [
  [744.300, 389.500, ""], [744.300, 409.500, ""], [744.300, 495.700, "20"], [711.300, 465.700, ""], [744.300, 551.800, "23"], [744.300, 607.800, "26"], [744.300, 663.800, "36"], [744.300, 719.800, "101"],
  [692.700, 775.800, "103"], [786.700, 775.800, "102"], [558.300, 596, "1"], [558.300, 652, "6"],
];
const hexPoints = (x, y) => `${x - 28},${y} ${x - 14},${y - 28} ${x + 14},${y - 28} ${x + 28},${y} ${x + 14},${y + 28} ${x - 14},${y + 28}`;

function Hex({ h }) {
  const [x, y, label] = h;
  return (
    <>
      <polygon points={hexPoints(x, y)} fill="#ff0" stroke="#000" strokeWidth="1.200" />
      {label ? (
        <text x={x - 0.5} y={y + 8} textAnchor="middle" fontSize="22" fontWeight="700">{label}</text>
      ) : null}
    </>
  );
}

function Coupling({ x, y }) {
  return (
    <g fill="#e87d0c" stroke="#a95503" strokeWidth=".6">
      <path d={`M${x - 5} ${y - 6}h10v2.500h-10zM${x - 5} ${y + 4}h10v2.500h-10z`} />
      <ellipse cx={x} cy={y} rx="4.800" ry="3.800" />
      <path d={`M${x - 5} ${y}h10`} stroke="#ffb055" />
    </g>
  );
}

/* Plan drawing; user units are window pixels. */
function Plan() {
  return (
    <svg className="absolute left-0 top-0 h-[825px] w-[1541px]" viewBox="329 121 1541 825" fontFamily='"Liberation Sans", Arial, sans-serif'>
      <defs>
        <linearGradient id="ph" x1="0" y1="0" x2="0" y2="1">
          <stop offset="0" stopColor="#2a2a2a" /><stop offset=".5" stopColor="#474747" /><stop offset="1" stopColor="#2a2a2a" />
        </linearGradient>
        <linearGradient id="pv" x1="0" y1="0" x2="1" y2="0">
          <stop offset="0" stopColor="#2a2a2a" /><stop offset=".5" stopColor="#4a4a4a" /><stop offset="1" stopColor="#2a2a2a" />
        </linearGradient>
        <linearGradient id="gv" x1="0" y1="0" x2="1" y2="0">
          <stop offset="0" stopColor="#0b5a16" /><stop offset=".5" stopColor="#3cae4c" /><stop offset="1" stopColor="#0b5a16" />
        </linearGradient>
        <linearGradient id="gh" x1="0" y1="0" x2="0" y2="1">
          <stop offset="0" stopColor="#0b5a16" /><stop offset=".5" stopColor="#3cae4c" /><stop offset="1" stopColor="#0b5a16" />
        </linearGradient>
        <linearGradient id="oh" x1="0" y1="0" x2="0" y2="1">
          <stop offset="0" stopColor="#c86400" /><stop offset=".5" stopColor="#ff9a1e" /><stop offset="1" stopColor="#c86400" />
        </linearGradient>
      </defs>

      <text x="432" y="447" fontSize="23" fontWeight="700" textLength="438">Ordinary Group II 0.20 gpm/ft² for 121 ft²</text>

      <path d="M598 260h8v145l-1 0v208h-7.700V305h.7z" />
      <path d="M601 609h120v8.700H601zM598 260h164v8H598z" />

      <g fill="none" stroke="#6e6e6e">
        <path d="M478.500 452v136" strokeDasharray="22 20" />
        <path d="M478 588.500h116" strokeDasharray="21 10" />
      </g>
      <g fill="none" stroke="#23722a">
        <path d="M627 289.500h13M655 289.500h13M637.500 289v58M657.500 289v50" />
      </g>
      <path d="M658 339.500h49.500v-10L747.500 349.500l-39 19-1-9H648" fill="none" stroke="#832c2c" />
      <path d="M635 388h89v3.500h-89zM635 392.500h89v3.500h-89z" fill="#7d2b2e" />

      <g stroke="#000" strokeWidth="1.200" fill="none">
        <path d="M653 358l27 45M680 404l50 119M682 332l49 31M682 352l48 29M682 515l47 62M681 541l37 70M631 604l47.500 143.500M769 729l4 18M507 545l30 18M501 547l42 76" />
      </g>

      {HEXES.map((h, k) => <Hex key={k} h={h} />)}
      <text x="711.500" y="472.500" fontSize="22" fontWeight="700" textAnchor="middle">104</text>
      <path d="M720 389h4v8l-3-4z" fill="#e3a400" />
      <path d="M754 437h8v87h-8zM759 573l3-6v18l-3-4z" />
      <path d="M754 260h8v106.500l-3-5h-5z" />
      <path d="M738 546h12v11h-12z" fill="#a09b78" opacity=".8" />

      <rect x="506" y="430" width="421" height="12" fill="url(#ph)" />
      <rect x="926" y="428" width="4" height="17" rx="1.500" fill="#ff8c12" stroke="#b55d02" strokeWidth=".7" />
      <polygon points={hexPoints(744.3, 409.5)} fill="#ff0" stroke="#000" strokeWidth="1.200" />
      <polygon points="716.3,389.5 730.3,361.5 758.3,361.5 772.3,389.5 767,400 758.3,381.5 730.3,381.500 721.500,400" fill="#ff0" />
      <polygon points={hexPoints(744.3, 389.5)} fill="none" stroke="#000" strokeWidth="1.200" />
      <path d="M721 400l9.300-18.500h28l9.300 18.500" fill="none" stroke="#000" strokeWidth="1.200" />
      <path d="M717 388h7v8h-4z" fill="#e8b800" />
      <g fontSize="22" fontWeight="700" textAnchor="middle">
        <text x="744" y="397">12</text>
        <text x="744" y="416">14</text>
      </g>
      <rect x="489" y="449" width="11" height="78" fill="url(#pv)" />
      <path d="M483 431h23v11h-5.500v7h-13v-7H483z" fill="url(#oh)" />
      <g fill="#ff9018" stroke="#b55d02" strokeWidth=".6">
        <rect x="481.500" y="428" width="3.500" height="16.500" rx="1.500" />
        <rect x="504.500" y="428" width="3.500" height="16.500" rx="1.500" />
        <rect x="486" y="445.500" width="16.500" height="3.500" rx="1.500" />
      </g>

      <circle cx="494" cy="536" r="12" fill="none" stroke="#222" strokeDasharray="3 2" />
      <circle cx="494" cy="536" r="10" fill="#101a9a" />
      <path d="M483 530h7v12h-7zM481 535h4v3h-4z" fill="#ffd257" />
      <circle cx="494" cy="536.500" r="7.500" fill="#ef7f0d" stroke="#b55d02" strokeWidth=".6" />
      <path d="M486 525h16v3h-2v8h-12v-8h-2z" fill="#f58a16" stroke="#b55d02" strokeWidth=".6" />
      <path d="M494.500 544v8" stroke="#e33" />
      <path d="M487 552.500q7.500-5 15 0-1 6.500-7.500 6.500t-7.500-6.500z" fill="#d80f14" />
      <path d="M489 552.500h9" stroke="#ff6b6b" />
      <rect x="503" y="532" width="13" height="8" fill="url(#gh)" />
      <rect x="517" y="532" width="14" height="8" fill="url(#oh)" />
      <g fill="#ffd257" stroke="#a97404" strokeWidth=".6">
        <rect x="507" y="530" width="2.500" height="12" /><rect x="514.500" y="530" width="3" height="12" /><rect x="528" y="530" width="3" height="13" />
      </g>
      <path d="M532 532h7q5 0 5 6v5h-7v-4h-5z" fill="#f2f2f2" stroke="#cc8a14" strokeWidth="1.200" />
      <rect x="535" y="547" width="8" height="27" fill="url(#gv)" />
      <rect x="533" y="543" width="12" height="3.500" fill="#ffe48a" stroke="#a97404" strokeWidth=".6" />
      <path d="M534 573h10v4l-1 3 1 3-3-1-2 1-2-1-3 1 1-4-1-2z" fill="#cff58a" stroke="#7aa33a" strokeWidth=".6" />
      <rect x="514" y="543" width="3" height="28" fill="#e01818" />
      <path d="M515.500 571v5M513 576l2-2 2 2" stroke="#999" fill="none" />
      <path d="M540 588.500h23M572 588.500h14" stroke="#777" />

      <circle cx="648.500" cy="349.500" r="9.500" fill="none" stroke="#111" strokeDasharray="3 1.500" />
      <path d="M648.500 349.500h-9.500a9.500 9.500 0 0 1 9.500-9.500zM648.500 349.500h9a9.500 9.500 0 0 1-9 9z" />
      <rect x="651" y="347.500" width="27" height="4" fill="#8d8a00" />
      <path d="M627 349.500h40" stroke="#2a2a80" />

      <path d="M680.400 280v258" stroke="#f00" strokeWidth="2.800" />
      <circle cx="680.400" cy="329.500" r="7" fill="none" stroke="#111" strokeWidth="1.300" strokeDasharray="5 1" />
      <path d="M672.500 335l16-16.500M672.500 482l16-16M676 476l9-5" stroke="#000" strokeWidth="1.200" />
      <path d="M680.500 330L704 500l25.500 191M684 412l11 22M682 442l48 81" stroke="#000" strokeWidth="1.200" fill="none" />
      <path d="M680.500 330L697 463" stroke="#000" strokeWidth="1" />
      <Coupling x={680.400} y={374} />
      <Coupling x={680.400} y={409.500} />
      <path d="M677 348h5v3h-5z" fill="#f22" />
      <rect x="675" y="430" width="12" height="12" fill="#9a9490" opacity=".85" />
      <path d="M680.500 432l5 4-5 4-5-4z" fill="#b09a88" />
      <path d="M685 538h33" stroke="#f0f" strokeWidth="2" />
      <path d="M677 533.500h7v3h2v4h-2l-2 1.500h-5l-1-3 1-2z" fill="#e87d0c" />
      <path d="M717 534.500h6l3 2v4l-4 2h-4l-1-3z" fill="#e87d0c" />
      <rect x="680" y="536.500" width="3" height="3" fill="#ddd" /><rect x="719" y="537" width="3" height="3" fill="#ddd" />
      <path d="M676 512.500q-24-4-32 12-8 20-14.500 70" fill="none" stroke="#c9c9c9" />
      <circle cx="629" cy="599.500" r="7" fill="none" stroke="#000" strokeDasharray="3 1" />
      <circle cx="629" cy="599.500" r="4.500" fill="#000" />
    </svg>
  );
}

const TABLE = [
  ["OCCUPANCY CLASSIFICATION", 336, "Ordinary Group II", 188],
  ["DENSITY (gpm/ft²)", 195, "0.20 for 1500 ft² (Actual 121 ft²)", 339],
  ["TOTAL HOSE STREAMS", 261, "250.00", 71],
  ["DRY CAPACITY", 165, "0.00 gal", 84],
  ["TOTAL HEADS FLOWING", 273, "3", 12],
  ["K-FACTOR", 117, "5.6", 31],
  ["TOTAL WATER REQUIRED", 285, "328.84", 71],
  ["TOTAL PRESSURE REQUIRED", 326, "29.477", 71],
  ["BASE of RISER (gpm)", 234, "78.84", 58],
  ["BASE of RISER (psi)", 220, "29.477", 71],
  ["SAFETY MARGIN (psi)", 242, "+52.787 (64.2%)", 171],
];

function HydraulicTable() {
  return (
    <div className="absolute left-[687px] top-[175px] w-[754px] border border-black font-['Liberation_Sans',Arial,sans-serif] text-[23px] font-bold leading-none text-black">
      <div className="flex h-[56px] items-center justify-center border-b border-black pt-[3px] text-[32.5px]">
        <Fit w={331}>Hydraulic Information</Fit>
      </div>
      {TABLE.map(([a, aw, v, vw], k) => (
        <div key={k} className={"flex h-[35px] " + (k < 10 ? "border-b border-black" : "")}>
          <div className="flex w-[374px] flex-none items-center border-r border-black pl-[9px] pt-[2px]"><Fit w={aw}>{a}</Fit></div>
          <div className="flex items-center pl-[9px] pt-[2px]"><Fit w={vw}>{v}</Fit></div>
        </div>
      ))}
    </div>
  );
}

function RecButton({ lines, icon, widths, arrow: hasArrow, active, sep }) {
  return (
    <div className={"flex h-[42px] flex-none flex-col items-center pt-[3px] " + (active ? "bg-[#c4c4c4] " : "") + (sep ? "w-[59px] border-l border-[#9c9c9c] bg-clip-padding" : "w-[56px]")}>
      <svg viewBox="0 0 18 17" className="h-[17px] w-[18px] flex-none">{icon}</svg>
      {lines.length === 1 ? (
        <div className="flex flex-1 items-center pb-[2px]"><Fit w={widths[0]}>{lines[0]}</Fit></div>
      ) : (
        <div className="flex flex-col items-center text-[10.5px] leading-[11px]">
          <Fit w={widths[0]} className="h-[10px]">{lines[0]}</Fit>
          <div className="flex h-[11px] items-center">
            <Fit w={widths[1]}>{lines[1]}</Fit>
            {hasArrow ? <svg viewBox="0 0 6 4" className="ml-1 mt-[3px] h-[4px] w-[6px]"><path d="M0 0h6L3 3.500z" fill="#777" /></svg> : null}
          </div>
        </div>
      )}
    </div>
  );
}

function Recorder() {
  const plus = (c) => <path d="M13 8v9M8.500 12.500h9" stroke={c} strokeWidth="2.400" />;
  return (
    <div className="absolute left-[203px] top-[163px] flex h-[124px] w-[483px] flex-col overflow-hidden rounded-[5px] border border-[#c8c8c8] bg-[#f0f0f0] font-['Open_Sans','Noto_Sans',sans-serif] text-[#333] shadow-[3px_3px_4px_rgba(0,0,0,0.45)]">
      <div className="flex h-[23px] flex-none items-center bg-white pl-[5px] text-[12.5px] text-black">
        <svg viewBox="0 0 16 16" className="mr-1 h-4 w-4">
          <rect x=".5" y=".5" width="15" height="15" fill="#4fd3df" stroke="#16535c" />
          <circle cx="8" cy="8" r="5" fill="none" stroke="#17717b" strokeWidth="1.500" strokeDasharray="2 1" />
          <circle cx="8" cy="8" r="2.500" fill="none" stroke="#17717b" strokeDasharray="2 1" />
        </svg>
        <Fit w={130} className="mr-[258px]">TestComplete Recording</Fit>
        <svg viewBox="0 0 12 12" className="h-3 w-3">
          <circle cx="6" cy="6" r="3.200" fill="none" stroke="#666" strokeWidth="2.600" />
          <circle cx="6" cy="6" r="5" fill="none" stroke="#666" strokeWidth="1.600" strokeDasharray="2 1.930" />
        </svg>
        <svg viewBox="0 0 12 12" className="ml-[13px] h-3 w-3"><path d="M1 9l5-5 5 5" fill="none" stroke="#666" strokeWidth="2" /></svg>
        <svg viewBox="0 0 12 12" className="ml-[13px] h-3 w-3"><path d="M1.500 1.500l9 9M10.500 1.500l-9 9" stroke="#666" strokeWidth="2" /></svg>
      </div>
      <div className="flex h-[54px] flex-none pl-[6px] pt-[3px] text-[11px]">
        <RecButton active lines={["Record"]} widths={[33]} icon={<circle cx="9" cy="8.500" r="7.300" fill="#8a0c1c" />} />
        <div className="w-[2px] flex-none" />
        <RecButton lines={["Pause"]} widths={[27]} icon={<path d="M1 .5h6.500v16H1zM10.500.5H17v16h-6.500z" fill="#0db2ff" />} />
        <div className="w-[2px] flex-none" />
        <RecButton lines={["Stop"]} widths={[22]} icon={<path d="M1 .5h16v16H1z" fill="#0db2ff" />} />
        <div className="w-[2px] flex-none" />
        <RecButton sep lines={["Add", "Check"]} widths={[19, 29]} icon={<><path d="M2 7l5 4 9-10" fill="none" stroke="#6d6d6d" strokeWidth="3.600" />{plus("#19b51b")}</>} />
        <RecButton sep arrow lines={["Run", "App"]} widths={[19, 18]} icon={<><path d="M2 1.500h14v13H2zM2 4.500h14" fill="none" stroke="#6d6d6d" strokeWidth="1.600" /><path d="M9 6.500l9 5-9 5z" fill="#19b51b" /></>} />
        <RecButton sep lines={["Add", "Comment"]} widths={[19, 43]} icon={<><path d="M2 1.500h13" stroke="#6d6d6d" strokeWidth="2" /><path d="M2 5h13M2 8.500h8M2 12h6M2 15h6" stroke="#19b51b" strokeWidth="2" />{plus("#6d6d6d")}</>} />
        <RecButton sep arrow lines={["Test", "Type"]} widths={[18, 22]} icon={<><path d="M3 9V1.500h7l4 4V9M3 9v6M10 1.500v4h4" fill="none" stroke="#6d6d6d" strokeWidth="1.500" /><circle cx="6.500" cy="13" r="2.600" fill="#f0f0f0" stroke="#1795dc" strokeWidth="1.800" /><path d="M9 12.500h9M16.500 12v4M13 12v3" stroke="#1795dc" strokeWidth="1.800" /></>} />
        <RecButton sep arrow lines={["Script", "Ext"]} widths={[26, 14]} icon={<><circle cx="8" cy="4" r="3.800" fill="#6d6d6d" /><path d="M2 16v-4q0-3 4-3l4 0v7z" fill="#6d6d6d" /><path d="M9.500 6.500h8v10h-8z" fill="#1795dc" /><path d="M11 9h5M11 11.500h5M11 14h5" stroke="#fff" /></>} />
      </div>
      <div className="flex h-[20px] flex-none items-start">
        <div className="w-[64px] flex-none pl-3 text-[13px] font-bold leading-[16px] text-[#222]"><Fit w={46}>Parent:</Fit></div>
        <div className="flex h-[17px] w-[410px] items-center bg-white pl-[2px] font-['Liberation_Sans',Arial,sans-serif] text-[12px] text-black">
          <Fit w={249}>{'Window("Afx:DockPane:400000:8:10003:10", "", 1)'}</Fit>
        </div>
      </div>
      <div className="flex h-[20px] flex-none items-start">
        <div className="w-[64px] flex-none pl-[13px] text-[13px] font-bold leading-[16px] text-[#222]"><Fit w={45}>Object:</Fit></div>
        <div className="flex h-[17px] w-[410px] items-center bg-white pl-[2px] font-['Liberation_Sans',Arial,sans-serif] text-[12px] text-black">
          <Fit w={247}>{'Window("Afx:ToolBar:400000:8:10003:10", "1", 10)'}</Fit>
        </div>
      </div>
    </div>
  );
}

/* Right dock: each strip stacks entries whose heights fill the column. */
function DockGrip() {
  return (
    <div className="flex h-[9px] flex-none items-center justify-center gap-[2px]">
      <div className="h-[2px] w-[2px] bg-[#333]" /><div className="h-[2px] w-[2px] bg-[#333]" />
      <div className="h-[2px] w-[2px] bg-[#333]" /><div className="h-[2px] w-[2px] bg-[#333]" />
    </div>
  );
}
function DockOverflow() {
  return (
    <div className="flex h-[13px] flex-none items-center justify-end bg-gradient-to-r from-[#5a606e] to-[#a6abb6] pr-[3px]">
      <svg viewBox="0 0 8 7" className="h-[7px] w-2"><path d="M1 1v5M3.500 0v7l4-3.500z" fill="#fff" stroke="#fff" strokeWidth=".8" /></svg>
    </div>
  );
}
function DockIcon({ n, h }) {
  return <div className="flex flex-none items-center justify-center" style={{ height: h }}><Icon n={n} /></div>;
}
function VFit({ h, children }) {
  const ref = useRef(null);
  useLayoutEffect(() => {
    const el = ref.current;
    el.style.letterSpacing = "0px";
    el.style.letterSpacing = (h - el.getBoundingClientRect().height) / String(children).length + "px";
  }, [h, children]);
  return <span ref={ref} className="inline-block flex-none whitespace-pre font-['Liberation_Sans',Arial,sans-serif] leading-none">{children}</span>;
}
function DockText({ h, w, children }) {
  return (
    <div className="flex flex-none items-center justify-center pl-[2px] text-[12.5px] text-black [writing-mode:vertical-rl]" style={{ height: h }}>
      <VFit h={w}>{children}</VFit>
    </div>
  );
}

function Dock() {
  const strip = "flex flex-none flex-col bg-gradient-to-r from-[#cdd0d6] via-[#bfc3ca] to-[#9aa0ac] ";
  return (
    <div className="flex h-[910px] w-[26px] flex-none flex-col overflow-hidden">
      <div className={strip + "h-[147px]"}>
        <DockGrip />
        <div className="h-[6px]" />
        <DockText h={66} w={65}>Import DWG</DockText>
        <div className="h-[3px]" />
        <DockIcon n="dwg" h={21} /><DockIcon n="pages" h={22} /><DockIcon n="chain" h={19} />
      </div>
      <DockOverflow />
      <div className={strip + "h-[110px]"}>
        <DockGrip />
        <div className="h-[2px]" />
        <DockIcon n="nodeG" h={20} />
        <div className="mx-auto my-[3px] h-px w-[14px] flex-none bg-[#eee]" />
        <DockIcon n="angle" h={22} />
        <div className="mx-auto my-[3px] h-px w-[14px] flex-none bg-[#eee]" />
        <DockIcon n="wandG" h={24} /><DockIcon n="nodes" h={18} />
      </div>
      <DockOverflow />
      <div className={strip + "h-[178px]"}>
        <DockGrip />
        <div className="h-[6px]" />
        <DockText h={33} w={32}>GLSL</DockText>
        <div className="h-[2px]" />
        <div className="mx-[2px] border border-[#e8d9a8] bg-gradient-to-b from-[#fbb55c] via-[#fdcf7d] to-[#ffe995]">
          <DockText h={62} w={55}>OpenGL®</DockText>
        </div>
        <DockIcon n="pcBlue" h={18} /><DockIcon n="pcGray" h={24} /><DockIcon n="props" h={18} />
      </div>
      <DockOverflow />
      <div className={strip + "h-[423px]"}>
        <DockGrip />
        <div className="h-[6px]" />
        <DockText h={132} w={131}>Hydraulic Calculations...</DockText>
        <div className="h-[3px]" />
        {["chart", "book", "grid", "lasso", "sheetNew", "eraser", "panel", "eyeDoc", "printHand", "docHand", "printer", "cross4", "win"].map((n) => (
          <DockIcon key={n} n={n} h={21} />
        ))}
      </div>
      <DockOverflow />
    </div>
  );
}

function Documents() {
  return (
    <div className="flex h-[891px] w-[1571px] flex-none flex-col">
      <div className="flex h-[19px] items-center text-white">
        <Labels from={323} className="h-[20px]" items={[[331, 383, "Start Page"], [397, 542, "Simple Threaded System.cad"]]} />
        <div className="ml-[12px] mt-[2px] flex h-[18px] w-[169px] flex-none items-center rounded-t-[3px] border border-b-0 border-[#d8eef2] bg-gradient-to-b from-white to-[#dfe1e6] pl-[2px] font-bold text-black">
          <Fit w={145}>Simple Grooved System.cad</Fit>
          <svg viewBox="0 0 9 9" className="ml-[9px] h-[8px] w-[8px]"><path d="M1 1l7 7M8 1L1 8" stroke="#555" strokeWidth="1.600" /></svg>
        </div>
        <svg viewBox="0 0 24 10" className="ml-[1140px] h-[10px] w-6"><path d="M5.500 1v8L1 5zM19 1v8l4.500-4z" fill="none" stroke="#6c6c6c" strokeWidth=".8" /></svg>
      </div>
      <div className="flex h-[872px] flex-col border-2 border-[#f3f3f3] border-t-[#fff]">
        <div className="flex flex-1 flex-col border-[2px] border-b-[3px] border-t-[3px] border-[#8e8e8e] border-b-white bg-[#d6d6d6] pl-[2px] pr-[2px]">
          <div className="flex h-[825px] flex-none">
            <div className="relative w-[1541px] flex-none overflow-hidden bg-[#595959]">
              <Plan />
              <HydraulicTable />
            </div>
            <div className="flex flex-1 items-center justify-center border-l-2 border-white bg-[#f0f0f0]">
              <div className="h-[18px] w-[2px] bg-[#8c8c8c]" />
            </div>
          </div>
          <div className="flex h-[17px] flex-none items-center border-t border-white bg-[#f0f0f0] pl-[763px]">
            <div className="h-[2px] w-[17px] bg-[#8c8c8c]" />
          </div>
          <div className="flex flex-1 items-start bg-gradient-to-b from-[#555] to-[#7a7a7a] pt-[3px]">
            {["M3 3v7M10 3v7L5.500 6.500z", "M9 3v7L4.500 6.500z", "M4 3v7l4.500-3.500z", "M10 3v7M3 3v7l4.500-3.500z"].map((d) => (
              <svg key={d} viewBox="0 0 13 13" className="mr-[4px] h-[13px] w-[12.600px] bg-[#f0f0f0]"><path d={d} fill="#444" stroke="#444" /></svg>
            ))}
            <svg viewBox="0 0 114 16" className="-mt-[2px] ml-[2px] h-[16px] w-[114px] flex-none">
              <path d="M52 15.500L64 .5h48L99 15.500z" fill="#b7becd" stroke="#e4e6ea" />
              <path d="M0 0h63L50 16H0z" fill="#f6f6f6" />
              <path d="M63 0L50 16" stroke="#777" />
              <text x="6" y="12.500" fontSize="12" fontWeight="700" textLength="40" lengthAdjust="spacingAndGlyphs" fontFamily='"Open Sans",sans-serif'>*Model</text>
              <text x="59" y="12.500" fontSize="12" textLength="38" lengthAdjust="spacingAndGlyphs" fontFamily='"Open Sans",sans-serif'>Sheet 1</text>
            </svg>
          </div>
        </div>
      </div>
    </div>
  );
}

export default function App() {
  return (
    <div className="relative flex h-[1032px] w-[1920px] flex-col overflow-hidden bg-[#535353] font-['Open_Sans','Noto_Sans',sans-serif] text-[12px] leading-[16px]">
      <div className="flex h-[23px] flex-none items-center bg-[#f9f2e7] pl-[3px] text-black">
        <Icon n="app" />
        <Fit w={916} className="ml-[5px]">{"AutoSPRINK® 2023 Platinum - C:\\Users\\B.Chambers\\Desktop\\AutomationTesting\\SmokeTesting\\SPRINK Smoke Testing Files\\Simple Grooved System.cad - [Simple Grooved ]"}</Fit>
        <svg viewBox="0 0 110 14" className="ml-[858px] mt-[-3px] h-[14px] w-[110px] flex-none">
          <path d="M1 7.500h10" stroke="#000" />
          <path d="M46.500 4.500h7v7h-7zM48.500 4V2.500h7v7H54" fill="none" stroke="#000" />
          <path d="M93 2l9 9M102 2l-9 9" stroke="#000" />
        </svg>
      </div>
      <div className="flex h-[23px] flex-none items-center text-[#f4f4f4]">
        <div className="w-5 flex-none pl-[2px]"><Icon n="cad" /></div>
        <Labels from={20} items={MENU} className="h-[23px]" />
        <svg viewBox="0 0 42 12" className="ml-[773px] mt-[5px] h-3 w-[42px]">
          <path d="M1 9h7M33 1.500l7 8M40 1.500l-7 8" stroke="#a5acba" strokeWidth="2" />
          <path d="M16.500 4.500h6v4h-6zM18.500 4V2.500h6v4H23" fill="none" stroke="#a5acba" strokeWidth="1.300" />
        </svg>
      </div>
      <div className="flex h-6 flex-none">{ROW1.map((r, k) => <ToolBar key={k} {...r} />)}</div>
      <div className="mt-px flex h-6 flex-none">{ROW2.map((r, k) => <ToolBar key={k} {...r} />)}</div>
      <div className="h-px w-[1894px] flex-none bg-[#b5b5b5]" />
      <div className="mt-px flex h-[910px] flex-none">
        <div className="flex w-[1894px] flex-none flex-col">
          <div className="flex h-[891px]">
            <LayersPanel />
            <div className="w-1 flex-none" />
            <Documents />
          </div>
          <div className="flex h-[19px] items-center justify-between border-t border-[#222] bg-gradient-to-b from-[#444859] via-[#32333a] to-[#2e2e2d] pl-1 pt-[4px] text-white">
            <Fit w={158}>Add a riser tag to the drawing.</Fit>
            <div className="flex items-center">
              {[["0 selected", 51, "w-16"], ["Elev1: 2'-3", 49, "w-[57px]"], ["23", 12, "w-[18px]"], ["Node Tag", 50, "w-[57px]"], ["# Off", 26, "w-8"], ["Foot", 25, "w-[26px]"]].map(([s, w, cls]) => (
                <div key={s} className={"flex h-[15px] flex-none items-center " + cls}>
                  <Fit w={w}>{s}</Fit>
                  {s === "Foot" ? null : <div className="ml-[2px] h-3 w-px bg-[#777]" />}
                </div>
              ))}
            </div>
          </div>
        </div>
        <Dock />
      </div>
      <div className="flex h-6 flex-none">{ROW3.map((r, k) => <ToolBar key={k} {...r} />)}</div>

      <Recorder />
      <div className="absolute left-[1040px] top-[87px] flex h-[41px] w-[170px] flex-col items-start justify-between border border-[#767676] bg-gradient-to-b from-white to-[#cfd1da] px-[5px] pb-[2px] pt-[2px] text-[#4c4c4c]">
        <Fit w={46} className="font-semibold">Riser Tag</Fit>
        <Fit w={158}>Add a riser tag to the drawing.</Fit>
      </div>
    </div>
  );
}
